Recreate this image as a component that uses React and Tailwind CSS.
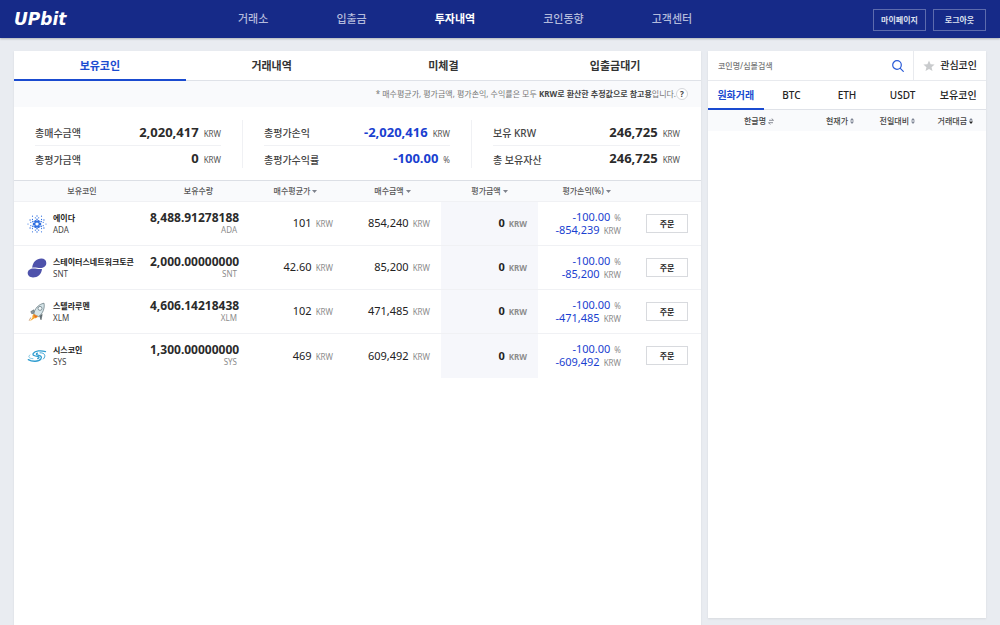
import { useState } from "react";

// ------------------------------------------------------------
// Data
// ------------------------------------------------------------
const NAV = ["거래소", "입출금", "투자내역", "코인동향", "고객센터"];
const TABS = ["보유코인", "거래내역", "미체결", "입출금대기"];
const MARKETS = ["원화거래", "BTC", "ETH", "USDT", "보유코인"];

const SUMMARY = [
  [
    { label: "총매수금액", value: "2,020,417", unit: "KRW" },
    { label: "총평가금액", value: "0", unit: "KRW" },
  ],
  [
    { label: "총평가손익", value: "-2,020,416", unit: "KRW", down: true },
    { label: "총평가수익률", value: "-100.00", unit: "%", down: true },
  ],
  [
    { label: "보유 KRW", value: "246,725", unit: "KRW" },
    { label: "총 보유자산", value: "246,725", unit: "KRW" },
  ],
];

const COINS = [
  { name: "에이다", symbol: "ADA", qty: "8,488.91278188", avg: "101", amount: "854,240", pnl: "-854,239", Icon: AdaIcon },
  { name: "스테이터스네트워크토큰", symbol: "SNT", qty: "2,000.00000000", avg: "42.60", amount: "85,200", pnl: "-85,200", Icon: SntIcon },
  { name: "스텔라루멘", symbol: "XLM", qty: "4,606.14218438", avg: "102", amount: "471,485", pnl: "-471,485", Icon: XlmIcon },
  { name: "시스코인", symbol: "SYS", qty: "1,300.00000000", avg: "469", amount: "609,492", pnl: "-609,492", Icon: SysIcon },
];

// ------------------------------------------------------------
// Icons
// ------------------------------------------------------------
const ADA_RINGS = [
  { count: 6, radius: 2.8, size: 1.5, turn: 0 },
  { count: 6, radius: 4.8, size: 0.8, turn: 30 },
  { count: 12, radius: 6.4, size: 0.6, turn: 15 },
  { count: 6, radius: 8, size: 0.65, turn: 30 },
  { count: 6, radius: 9, size: 0.6, turn: 0 },
];

function AdaIcon() {
  return (
    <svg viewBox="-10 -10 20 20" className="size-5 shrink-0" fill="#2f6fe0" aria-hidden="true">
      {ADA_RINGS.map((ring, r) =>
        Array.from({ length: ring.count }, (_, i) => {
          const a = ((i * 360) / ring.count + ring.turn) * (Math.PI / 180);
          return <circle key={`${r}-${i}`} cx={ring.radius * Math.cos(a)} cy={ring.radius * Math.sin(a)} r={ring.size} />;
        })
      )}
    </svg>
  );
}

function SntIcon() {
  return (
    <svg viewBox="0 0 20 20" className="size-5 shrink-0" fill="#4e52ab" aria-hidden="true">
      <path d="M5.200 9.700C5.600 4.300 9.600.600 14.300.600c3 0 5 1.600 5 4.300 0 3.200-2.800 5.100-6 5.200-2.900 0-4.800-1-8.100-.4z" />
      <path d="M15 10.900c-.4 5-4.300 8.500-9 8.500-3 0-5.300-1.700-5.300-4.400 0-2.900 2.700-4.600 5.700-4.600 3.200 0 5.200 1.200 8.600.5z" />
    </svg>
  );
}

function XlmIcon() {
  return (
    <svg viewBox="0 0 20 20" className="size-5 shrink-0" aria-hidden="true">
      <path d="M7 7.800L3.800 9.600l1 2.200L7.500 11z" fill="#8b979c" stroke="#59666b" strokeWidth=".6" />
      <path d="M12.500 13.600l1.500 4.200 1.200-5.300z" fill="#647177" stroke="#4c575b" strokeWidth=".6" />
      <path d="M6.800 12.500C7.500 6.500 11.500 2.300 17 1.200c1 5-1.200 10.400-5.300 13.400z" fill="#d5e4e8" stroke="#6e8087" strokeWidth=".8" />
      <circle cx="13" cy="6.400" r="2" fill="#f2f8fa" stroke="#6e8087" strokeWidth=".8" />
      <path d="M7 12l4 2.600c-.7 1.500-2.200 1.800-3.600 1.700L3 19.200l2.500-3.800c-.4-1.500.2-2.700 1.500-3.400z" fill="#f5a52a" />
      <path d="M6.800 12.600l3.600 2.200-2.300.8z" fill="#e4632b" />
      <path d="M3.800 15.500l-1.600 3.200" stroke="#b6793c" strokeWidth=".7" />
    </svg>
  );
}

function SysIcon() {
  return (
    <svg viewBox="0 0 20 20" className="size-5 shrink-0" fill="none" stroke="#2f9dd0" strokeLinecap="round" aria-hidden="true">
      <path d="M18.500 5.600C14 4.200 8 4.700 6.300 7.300c-1.300 2.200 1.900 2.700 4.200 3 1.900.3 2 1.700.2 2.200" strokeWidth="1.300" />
      <path d="M1.300 13.600c3.500 2.200 10.400 2.400 12.600-.6 1.600-2.300-.7-3.500-3-3.900-1.700-.3-2-1.300-.5-1.900" strokeWidth="1.300" />
      <path d="M13 6.800c5-.2 6.300 3.200 3.400 6.200" strokeWidth=".9" />
      <path d="M6 12.700C1.800 12.500.6 10.600 3 8.800" stroke="#76bddd" strokeWidth=".9" />
    </svg>
  );
}

function SearchIcon() {
  return (
    <svg viewBox="0 0 12 12" className="size-3" fill="none" stroke="#2a5bd7" strokeWidth="1.200" strokeLinecap="round" aria-hidden="true">
      <circle cx="5" cy="5" r="4.300" />
      <path d="M8.300 8.300l3 3" />
    </svg>
  );
}

function StarIcon() {
  return (
    <svg viewBox="0 0 12 12" className="size-3" fill="#c9cbcd" aria-hidden="true">
      <path d="M6 .6l1.600 3.700 4 .3-3.050 2.600.95 3.900L6 9.050 2.500 11.100l.95-3.900L.4 4.600l4-.3z" />
    </svg>
  );
}

function Caret() {
  return (
    <svg viewBox="0 0 5 3" className="ml-0.5 inline-block h-[3px] w-[5px] align-middle" fill="#7e828c" aria-hidden="true">
      <path d="M0 0h5L2.500 3z" />
    </svg>
  );
}

function SortIcon({ active }) {
  return (
    <svg viewBox="0 0 4 6" className="ml-0.5 inline-block h-1.5 w-1 align-middle" aria-hidden="true">
      <path d="M0 2.400L2 0l2 2.400z" fill="#7e8494" />
      <path d="M0 3.600L2 6l2-2.400z" fill={active ? "#222" : "#7e8494"} />
    </svg>
  );
}

function SwapIcon() {
  return (
    <svg viewBox="0 0 6 7" className="ml-0.5 inline-block h-[7px] w-1.5 align-middle" fill="none" stroke="#6e737e" strokeWidth=".8" aria-hidden="true">
      <path d="M1 2.300h4.500L3.700.5M5 4.700H.5l1.800 1.800" />
    </svg>
  );
}

// ------------------------------------------------------------
// Pieces
// ------------------------------------------------------------
function Unit({ children, bold }) {
  return <span className={`ml-1 text-[8px] text-[#8c8c8c] ${bold ? "font-bold" : "font-normal"}`}>{children}</span>;
}

function Header() {
  return (
    <header className="flex h-[38px] shrink-0 items-center bg-[#162a88] px-3.5 shadow-[0_1px_2px_rgba(0,0,0,0.25)]">
      <a href="#" className="w-[224px] font-['DejaVu_Sans',sans-serif] text-[17px] leading-5 font-bold text-white italic">UPbit</a>
      <nav className="flex flex-1 gap-[68px] text-[11px]">
        {NAV.map((item) => (
          <a key={item} href="#" className={item === "투자내역" ? "font-bold text-white" : "font-medium text-[#b4bbdc]"}>
            {item}
          </a>
        ))}
      </nav>
      <div className="flex gap-[7px] pt-0.5 text-[8px] font-bold text-[#dde0ef]">
        <button className="h-[22px] w-[53px] border border-[#5d6bad]">마이페이지</button>
        <button className="h-[22px] w-[53px] border border-[#5d6bad]">로그아웃</button>
      </div>
    </header>
  );
}

function Summary() {
  return (
    <dl className="grid grid-cols-3 pt-[13px] pb-3">
      {SUMMARY.map((rows, i) => (
        <div key={i} className={`px-[21px] ${i < 2 ? "border-r border-[#f0f1f4]" : ""}`}>
          {rows.map((row, j) => (
            <div
              key={row.label}
              className={`flex justify-between leading-4 ${j === 0 ? "h-[26px] items-center border-b border-[#f0f1f4]" : "h-[22px] items-end"}`}
            >
              <dt className="text-[10px] font-medium text-[#444]">{row.label}</dt>
              <dd className={`text-[13px] font-bold ${row.down ? "text-[#1a3fd0]" : "text-[#2b2b2b]"}`}>
                {row.value}
                <span className="ml-[5px] text-[8px] font-normal text-[#555]">{row.unit}</span>
              </dd>
            </div>
          ))}
        </div>
      ))}
    </dl>
  );
}

function CoinTable() {
  return (
    <table className="w-full table-fixed border-t border-[#dcdfe5] text-[11px] text-[#222]">
      <thead className="bg-[#f9fafc] text-[8px] text-[#555]">
        <tr className="h-[21px] border-b border-[#f0f1f4]">
          <th className="font-medium">보유코인</th>
          <th className="w-[97px] font-medium">보유수량</th>
          <th className="w-[97px] font-medium">매수평균가<Caret /></th>
          <th className="w-[97px] font-medium">매수금액<Caret /></th>
          <th className="w-[97px] font-medium">평가금액<Caret /></th>
          <th className="w-[97px] font-medium">평가손익(%)<Caret /></th>
          <th className="w-[66px]"></th>
        </tr>
      </thead>
      <tbody>
        {COINS.map(({ name, symbol, qty, avg, amount, pnl, Icon }) => (
          <tr key={symbol} className="h-11 border-b border-[#f0f1f4] text-right last:border-b-0">
            <td className="pl-[13px] text-left">
              <div className="flex items-center gap-1.5">
                <Icon />
                <div className="text-[8px] leading-3 whitespace-nowrap">
                  <strong className="block font-bold text-[#222]">{name}</strong>
                  <span className="text-[#444]">{symbol}</span>
                </div>
              </div>
            </td>
            <td className="pr-2.5 text-[8px] leading-3">
              <strong className="block text-[12px] leading-3 font-bold text-[#2b2b2b]">{qty}</strong>
              <span className="text-[#8c8c8c]">{symbol}</span>
            </td>
            <td className="pr-[11px]">{avg}<Unit>KRW</Unit></td>
            <td className="pr-[11px]">{amount}<Unit>KRW</Unit></td>
            <td className="bg-[#f6f7fb] pr-[11px] font-bold">0<Unit bold>KRW</Unit></td>
            <td className="pr-3.5 leading-3 text-[#1a3fd0]">
              <div>-100.00<Unit>%</Unit></div>
              <div>{pnl}<Unit>KRW</Unit></div>
            </td>
            <td className="pr-[13px]">
              <button className="h-[19px] w-[42px] border border-[#d8dade] text-[8px] font-bold text-[#222]">주문</button>
            </td>
          </tr>
        ))}
      </tbody>
    </table>
  );
}

function Investments() {
  const [tab, setTab] = useState(TABS[0]);

  return (
    <main className="flex-1 bg-white shadow-[0_1px_2px_rgba(0,0,0,0.08)]">
      <div className="grid h-[30px] grid-cols-4 border-b border-[#dfe2e8]">
        {TABS.map((name) => (
          <button
            key={name}
            onClick={() => setTab(name)}
            className={`-mb-px border-b-2 pt-0.5 text-[11px] font-bold ${name === tab ? "border-[#1a4bd0] text-[#1a4bd0]" : "border-transparent text-[#333]"}`}
          >
            {name}
          </button>
        ))}
      </div>
      <div className="flex h-[26px] items-center justify-end bg-[#f9fafc] pr-[13px] text-[8px] text-[#777]">
        <p>
          * 매수평균가, 평가금액, 평가손익, 수익률은 모두 <strong className="text-[#444]">KRW로 환산한 추정값으로 참고용</strong>입니다.
        </p>
        <button className="size-3 rounded-full border border-[#d5d7db] bg-white text-[8px] leading-[10px] font-bold text-[#444]">?</button>
      </div>
      <Summary />
      <CoinTable />
    </main>
  );
}

function MarketPanel() {
  const [market, setMarket] = useState(MARKETS[0]);

  return (
    <aside className="mb-[7px] w-[278px] bg-white shadow-[0_1px_2px_rgba(0,0,0,0.08)]">
      <div className="flex h-[30px] border-b border-[#e8eaee]">
        <input
          type="text"
          aria-label="코인명/심볼검색"
          placeholder="코인명/심볼검색"
          className="min-w-0 flex-1 pl-2.5 text-[8px] font-medium outline-none placeholder:text-[#777]"
        />
        <button aria-label="검색" className="px-[9px]"><SearchIcon /></button>
        <button className="flex items-center gap-[5px] border-l border-[#e8eaee] px-[9px] text-[10px] font-medium text-[#222]">
          <StarIcon />
          관심코인
        </button>
      </div>
      <div className="grid h-[29px] grid-cols-5 border-b border-[#dfe2e8]">
        {MARKETS.map((name) => (
          <button
            key={name}
            onClick={() => setMarket(name)}
            className={`-mb-px border-b-2 pt-0.5 text-[10px] ${name === market ? "border-[#1a4bd0] font-bold text-[#1a4bd0]" : "border-transparent font-medium text-[#222]"}`}
          >
            {name}
          </button>
        ))}
      </div>
      <table className="w-full table-fixed bg-[#f9fafc] text-[8px] text-[#444]">
        <thead>
          <tr className="h-[21px] text-right">
            <th className="text-center font-medium">한글명<SwapIcon /></th>
            <th className="w-11 font-medium">현재가<SortIcon /></th>
            <th className="w-[61px] font-medium">전일대비<SortIcon /></th>
            <th className="w-[71px] pr-[13px] font-medium">거래대금<SortIcon active /></th>
          </tr>
        </thead>
      </table>
    </aside>
  );
}

export default function App() {
  return (
    <div className="flex min-h-screen flex-col bg-[#e9ecf1] font-['Noto_Sans','Noto_Sans_CJK_KR',sans-serif]">
      <Header />
      <div className="flex flex-1 gap-[7px] px-3.5 pt-[13px]">
        <Investments />
        <MarketPanel />
      </div>
    </div>
  );
}
